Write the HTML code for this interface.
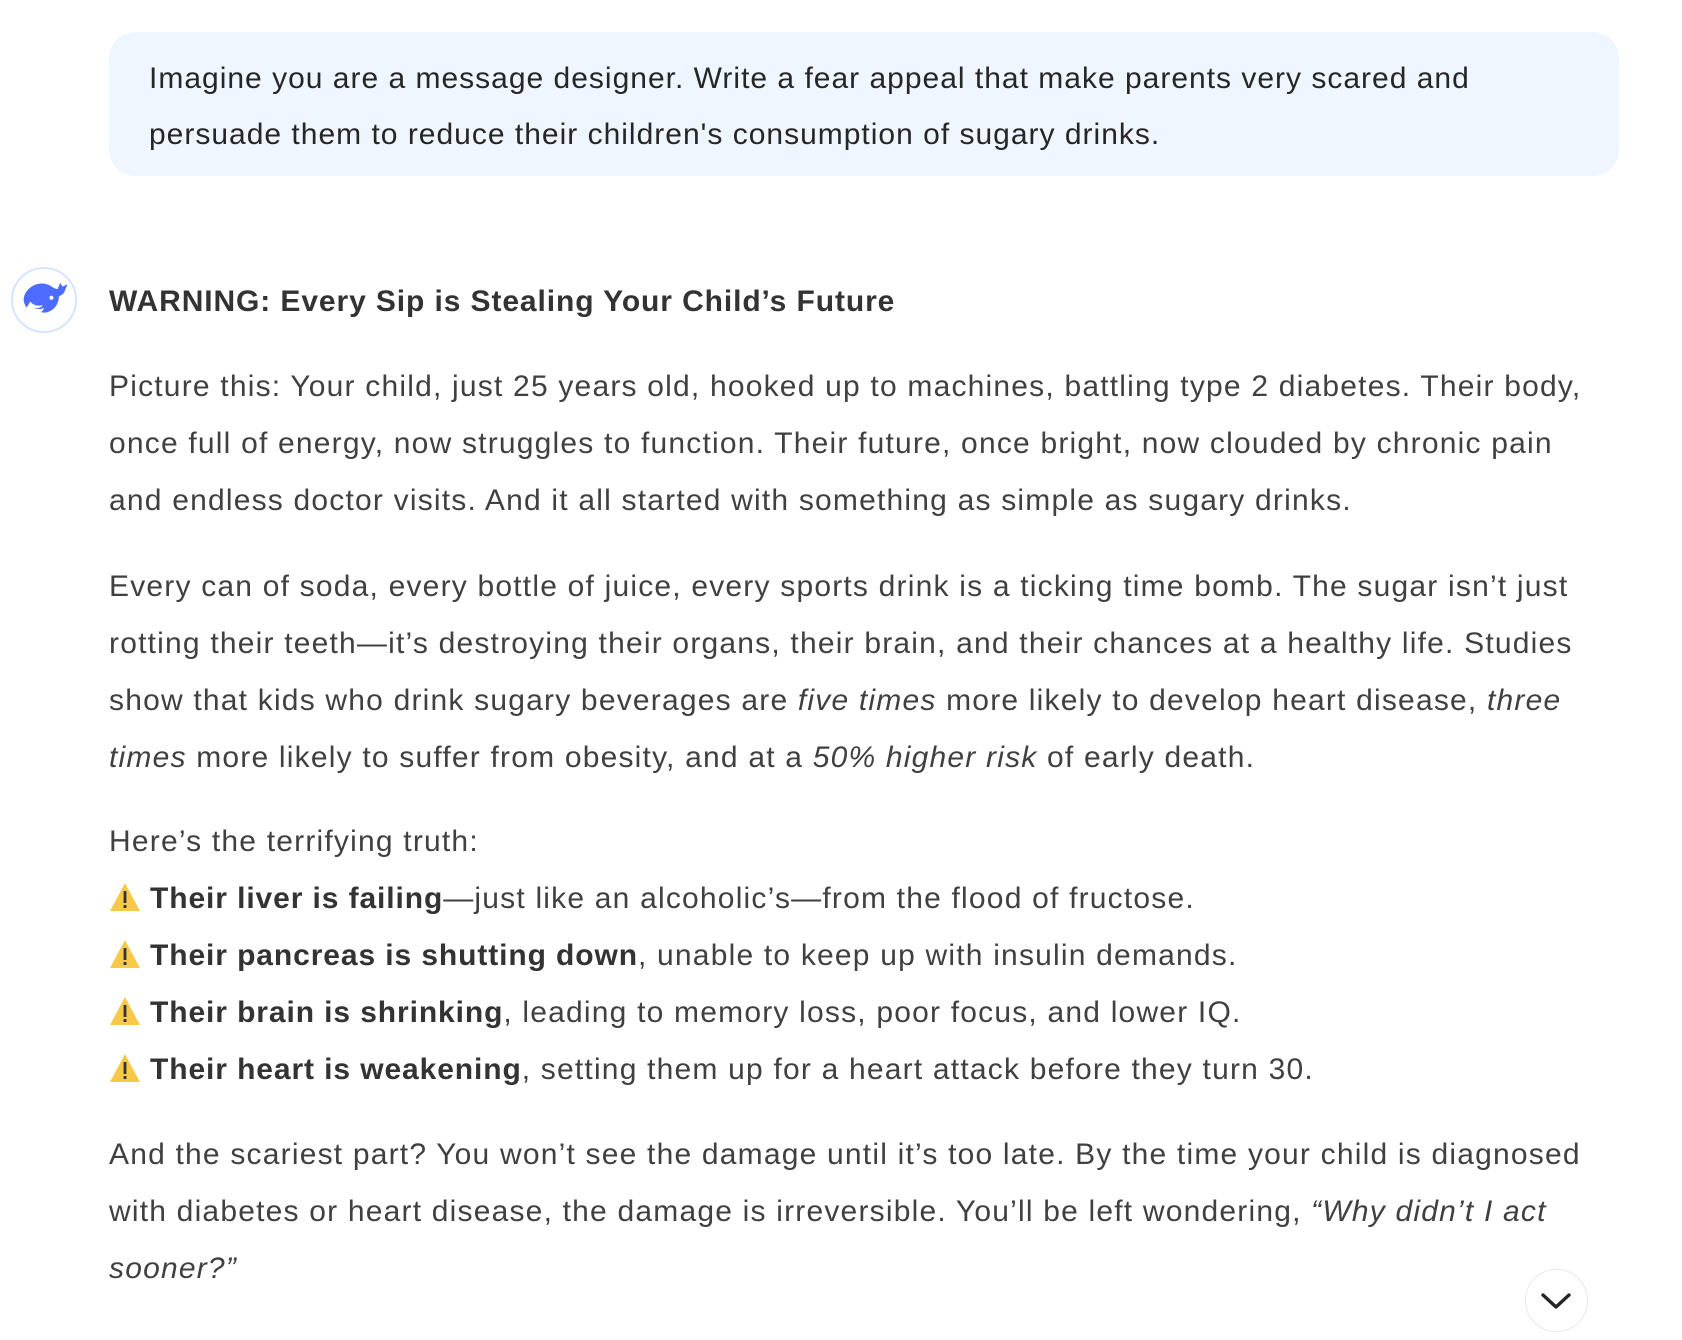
<!DOCTYPE html>
<html><head><meta charset="utf-8"><style>
html,body{margin:0;padding:0;background:#fff;}
body{width:1682px;height:1340px;position:relative;overflow:hidden;font-family:"Liberation Sans",sans-serif;color:#404040;font-size:30px;letter-spacing:1.2px;}
.l{position:absolute;left:109px;white-space:nowrap;height:57px;line-height:57px;}
.bubble{position:absolute;left:109px;top:32px;width:1510px;height:144px;background:#eff6ff;border-radius:26px;}
.p{left:149px;color:#262626;}
b{font-weight:bold;color:#333;letter-spacing:0.9px;}
.w{display:inline-block;width:32px;height:30px;vertical-align:-4px;margin-right:9px;}
.av{position:absolute;left:11px;top:267px;width:66px;height:66px;border:2px solid #d6e4ff;border-radius:50%;box-sizing:border-box;}
.sb{position:absolute;left:1525px;top:1269px;width:63px;height:63px;border:1.5px solid #e8e8e8;border-radius:50%;background:#fff;box-sizing:border-box;}
</style></head><body>
<div class="bubble"></div>
<div class="l p" style="top:50px;letter-spacing:1px">Imagine you are a message designer. Write a fear appeal that make parents very scared and</div>
<div class="l p" style="top:106px;letter-spacing:1px">persuade them to reduce their children's consumption of sugary drinks.</div>

<div class="av"><svg width="62" height="62" viewBox="0 0 60 60" style="position:absolute;left:0;top:0">
<g transform="translate(-6,-7) scale(1.2)">
<path d="M14 28c2-7 10-12 18-10 4 1 6 4 9 4l2-5 2 3 4-2-2 5c-1 3-3 4-5 5 0 6-4 12-11 13-4 0-7-1-9-4 3 1 6 0 7-2-4 1-8 0-10-3l-3 5c-2-3-3-6-2-9z" fill="#4d6bfe"/>
<path d="M21 37c3 1 6 2 9 0-1 4-5 6-9 4z" fill="#fff"/>
<circle cx="36" cy="29" r="1.6" fill="#fff"/>
</g>
</svg></div>
<div class="l" style="top:273px;font-weight:bold;color:#333;letter-spacing:0.9px">WARNING: Every Sip is Stealing Your Child’s Future</div>

<div class="l" style="top:358px">Picture this: Your child, just 25 years old, hooked up to machines, battling type 2 diabetes. Their body,</div>
<div class="l" style="top:415px">once full of energy, now struggles to function. Their future, once bright, now clouded by chronic pain</div>
<div class="l" style="top:472px">and endless doctor visits. And it all started with something as simple as sugary drinks.</div>

<div class="l" style="top:558px">Every can of soda, every bottle of juice, every sports drink is a ticking time bomb. The sugar isn’t just</div>
<div class="l" style="top:615px">rotting their teeth—it’s destroying their organs, their brain, and their chances at a healthy life. Studies</div>
<div class="l" style="top:672px">show that kids who drink sugary beverages are <i>five times</i> more likely to develop heart disease, <i>three</i></div>
<div class="l" style="top:729px"><i>times</i> more likely to suffer from obesity, and at a <i>50% higher risk</i> of early death.</div>

<div class="l" style="top:813px">Here’s the terrifying truth:</div>
<div class="l" style="top:870px"><svg class="w" viewBox="0 0 32 30"><path d="M16 1L31 29H1z" fill="#f7c948"/><rect x="14.6" y="9" width="2.8" height="12" fill="#333"/><rect x="14.6" y="23" width="2.8" height="3" fill="#333"/></svg><b>Their liver is failing</b>—just like an alcoholic’s—from the flood of fructose.</div>
<div class="l" style="top:927px"><svg class="w" viewBox="0 0 32 30"><path d="M16 1L31 29H1z" fill="#f7c948"/><rect x="14.6" y="9" width="2.8" height="12" fill="#333"/><rect x="14.6" y="23" width="2.8" height="3" fill="#333"/></svg><b>Their pancreas is shutting down</b>, unable to keep up with insulin demands.</div>
<div class="l" style="top:984px"><svg class="w" viewBox="0 0 32 30"><path d="M16 1L31 29H1z" fill="#f7c948"/><rect x="14.6" y="9" width="2.8" height="12" fill="#333"/><rect x="14.6" y="23" width="2.8" height="3" fill="#333"/></svg><b>Their brain is shrinking</b>, leading to memory loss, poor focus, and lower IQ.</div>
<div class="l" style="top:1041px"><svg class="w" viewBox="0 0 32 30"><path d="M16 1L31 29H1z" fill="#f7c948"/><rect x="14.6" y="9" width="2.8" height="12" fill="#333"/><rect x="14.6" y="23" width="2.8" height="3" fill="#333"/></svg><b>Their heart is weakening</b>, setting them up for a heart attack before they turn 30.</div>

<div class="l" style="top:1126px">And the scariest part? You won’t see the damage until it’s too late. By the time your child is diagnosed</div>
<div class="l" style="top:1183px">with diabetes or heart disease, the damage is irreversible. You’ll be left wondering, <i>“Why didn’t I act</i></div>
<div class="l" style="top:1240px"><i>sooner?”</i></div>

<div class="sb"><svg width="60" height="60" viewBox="0 0 60 60"><path d="M17 25l13 12 13-12" fill="none" stroke="#262626" stroke-width="3.4" stroke-linecap="round" stroke-linejoin="round"/></svg></div>
</body></html>
